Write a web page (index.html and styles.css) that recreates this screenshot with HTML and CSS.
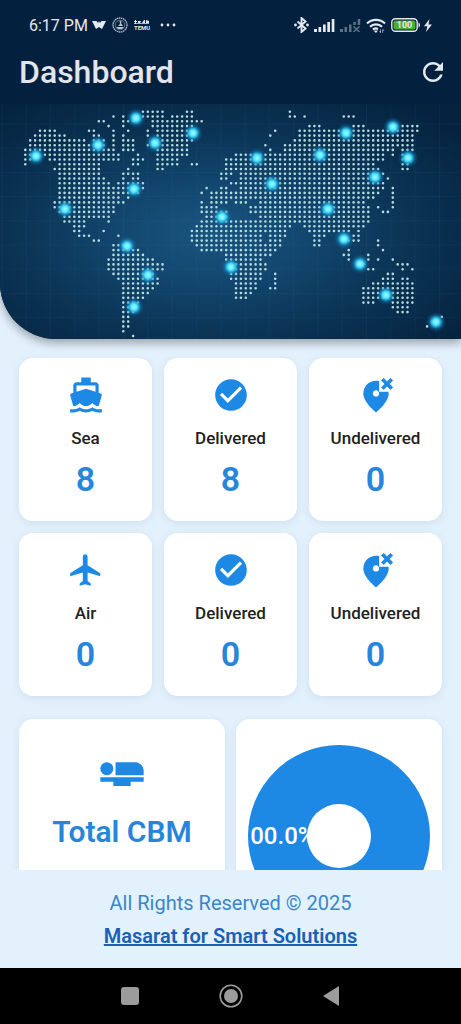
FILE: index.html
```html
<!doctype html>
<html lang="en">

<head>
  <meta charset="utf-8" />
  <meta name="viewport" content="width=device-width,initial-scale=1" />
  <meta name="theme-color" content="#03213e" />
  <title>Dashboard</title>

  <link rel="stylesheet" href="styles.css">
</head>

<body>
  <svg class="defs" aria-hidden="true">
    <symbol id="icon-boat" viewBox="0 0 24 24">
      <path d="M20 21c-1.39 0-2.78-.47-4-1.32-2.44 1.71-5.56 1.71-8 0C6.78 20.53 5.39 21 4 21H2v2h2c1.38 0 2.74-.35 4-.99 2.52 1.29 5.48 1.29 8 0 1.26.65 2.62.99 4 .99h2v-2h-2zM3.95 19H4c1.6 0 3.02-.88 4-2 .98 1.12 2.4 2 4 2s3.02-.88 4-2c.98 1.12 2.4 2 4 2h.05l1.89-6.68c.08-.26.06-.54-.06-.78s-.34-.42-.6-.5L20 10.62V6c0-1.1-.9-2-2-2h-3V1H9v3H6c-1.1 0-2 .9-2 2v4.62l-1.29.42c-.26.08-.48.26-.6.5s-.15.52-.06.78L3.95 19zM6 6h12v3.97L12 8 6 9.97V6z" />
    </symbol>
    <symbol id="icon-check" viewBox="0 0 24 24">
      <path d="M12 2C6.48 2 2 6.48 2 12s4.48 10 10 10 10-4.48 10-10S17.52 2 12 2zm-2 15l-5-5 1.41-1.41L10 14.17l7.59-7.59L19 8l-9 9z" />
    </symbol>
    <symbol id="icon-wrong" viewBox="0 0 24 24">
      <path d="M14 10V3.26C13.35 3.09 12.68 3 12 3c-4.2 0-8 3.22-8 8.2 0 3.32 2.67 7.25 8 11.8 5.33-4.55 8-8.48 8-11.8 0-.41-.04-.81-.09-1.2H14zm-2 3c-1.1 0-2-.9-2-2s.9-2 2-2 2 .9 2 2-.9 2-2 2z" />
      <path d="M22.540 2.880l-1.420-1.420L19 3.590l-2.120-2.130-1.420 1.420L17.590 5l-2.130 2.120 1.420 1.420L19 6.410l2.120 2.130 1.420-1.420L20.410 5z" stroke="currentColor" stroke-width=".5" />
    </symbol>
    <symbol id="icon-flight" viewBox="0 0 24 24">
      <path d="M21 16v-2l-8-5V3.5c0-.83-.67-1.5-1.5-1.5S10 2.67 10 3.5V9l-8 5v2l8-2.5V19l-2 1.5V22l3.5-1 3.5 1v-1.5L13 19v-5.5l8 2.5z" />
    </symbol>
  </svg>

  <header class="header">
    <div class="status">
      <div class="status-left">
        <span class="time">6:17 PM</span>
        <svg width="14" height="12" viewBox="0 0 14 12">
          <path d="M0 2h4.500l1.500 2 1-2 1 2 1.500-2H14l-4 8L7 8l-3 2z" />
        </svg>
        <svg class="emblem" width="16" height="16" viewBox="0 0 16 16">
          <circle cx="8" cy="8" r="7" fill="none" stroke="currentColor" stroke-width="1.300" stroke-dasharray="1.500 .6" />
          <circle cx="8" cy="8" r="4.800" fill="none" stroke="currentColor" stroke-width=".5" />
          <path d="M4 10h8l-2 2H6zM7.500 4h2L9 6l2 3H6l2-2z" />
        </svg>
        <svg class="temu" width="16" height="12" viewBox="0 0 16 12">
          <path d="M0 2h3v1H0zM1 1h1v4H1zM4 2h3l-1 2H4zM8 4l2-3h1v3zM12 1l3 1v2h-3zM0 4h15v.8H0z" />
          <text x="0" y="11">TEMU</text>
        </svg>
        <svg width="16" height="4" viewBox="0 0 16 4">
          <circle cx="2" cy="2" r="1.400" />
          <circle cx="8" cy="2" r="1.400" />
          <circle cx="14" cy="2" r="1.400" />
        </svg>
      </div>
      <div class="status-right">
        <svg width="15" height="16" viewBox="0 0 15 16">
          <path d="M3.500 4.500l8 7-4 3.500V1l4 3.500-8 7" fill="none" stroke="currentColor" stroke-width="1.900" />
          <circle cx="1.500" cy="8" r="1.400" />
          <circle cx="13.500" cy="8" r="1.400" />
        </svg>
        <svg width="21" height="14" viewBox="0 0 21 14">
          <path d="M0 11h3v3H0zM4.500 9h2.700v5H4.500zM9 6.500h2.700V14H9zM13.300 4h2.700v10h-2.700zM17.700 1h2.700v13h-2.700z" />
        </svg>
        <svg class="dim" width="21" height="14" viewBox="0 0 21 14">
          <path d="M0 11h3v3H0zM4.500 9h2.500v5H4.500zM9 6.500h2.500V14H9zM13.300 4h2.500v3h-2.500zM17.700 1h2.500v6h-2.500z" />
          <path d="M13.500 8.500l6 5.500m0-5.500l-6 5.500" fill="none" stroke="currentColor" stroke-width="1.600" />
        </svg>
        <svg width="20" height="15" viewBox="0 0 20 15">
          <path d="M1 5.500a13 13 0 0 1 18 0M4 8.800a8.500 8.500 0 0 1 12 0M7 11.500a4.500 4.500 0 0 1 5 -.6" fill="none" stroke="currentColor" stroke-width="2.200" />
          <path d="M7.500 12.500L10 15l2-2.500zM14.500 11v2.500h-1.500l2 1.500V11zM17 15v-2.500h1.500l-2-1.500V15z" />
        </svg>
        <div class="power">
          <svg class="battery" width="30" height="14" viewBox="0 0 30 14">
            <rect x=".8" y=".8" width="25.400" height="12.400" rx="3.500" fill="none" stroke="currentColor" stroke-width="1.400" />
            <rect class="charge" x="2.500" y="2.500" width="22" height="9" rx="2" />
            <path d="M27.500 4.500c2 .5 2 4.500 0 5z" />
            <text x="13.500" y="10.300">100</text>
          </svg>
          <svg width="8" height="13" viewBox="0 0 8 13">
            <path d="M5.500 0L0 7.300h3.400L2 13l6-7.500H4.500z" />
          </svg>
        </div>
      </div>
    </div>

    <div class="title-bar">
      <h1>Dashboard</h1>
      <button type="button" class="refresh" aria-label="Refresh">
        <svg viewBox="0 0 24 24">
          <path d="M17.650 6.350C16.200 4.900 14.210 4 12 4c-4.420 0-7.990 3.580-7.990 8s3.570 8 7.990 8c3.730 0 6.840-2.550 7.730-6h-2.080c-.82 2.330-3.040 4-5.650 4-3.310 0-6-2.690-6-6s2.690-6 6-6c1.660 0 3.140.69 4.220 1.780L13 11h7V4l-2.350 2.350z" />
        </svg>
      </button>
    </div>

    <svg class="map" viewBox="0 0 461 235" aria-label="World map">
      <defs>
        <radialGradient id="glow">
          <stop offset="0" stop-color="#9ffcff" />
          <stop offset=".3" stop-color="#5be8fb" />
          <stop offset=".5" stop-color="#22b2e6" stop-opacity=".85" />
          <stop offset=".7" stop-color="#1583bd" stop-opacity=".4" />
          <stop offset="1" stop-color="#0f70ad" stop-opacity="0" />
        </radialGradient>
      </defs>
      <path class="map-grid" />
      <path class="map-dots" />
      <g class="map-nodes"></g>
    </svg>
  </header>

  <main class="content">
    <div class="stats">
      <section class="card stat">
        <svg class="icon"><use href="#icon-boat" /></svg>
        <div class="label">Sea</div>
        <div class="number">8</div>
      </section>
      <section class="card stat">
        <svg class="icon"><use href="#icon-check" /></svg>
        <div class="label">Delivered</div>
        <div class="number">8</div>
      </section>
      <section class="card stat">
        <svg class="icon"><use href="#icon-wrong" /></svg>
        <div class="label">Undelivered</div>
        <div class="number">0</div>
      </section>
      <section class="card stat">
        <svg class="icon"><use href="#icon-flight" /></svg>
        <div class="label">Air</div>
        <div class="number">0</div>
      </section>
      <section class="card stat">
        <svg class="icon"><use href="#icon-check" /></svg>
        <div class="label">Delivered</div>
        <div class="number">0</div>
      </section>
      <section class="card stat">
        <svg class="icon"><use href="#icon-wrong" /></svg>
        <div class="label">Undelivered</div>
        <div class="number">0</div>
      </section>
    </div>

    <div class="totals">
      <section class="card total">
        <svg class="icon" viewBox="0 0 24 24">
          <circle cx="5" cy="10" r="3" />
          <path d="M22 11v2H9V7h9c2.210 0 4 1.790 4 4zM2 14v2h6v2h8v-2h6v-2z" />
        </svg>
        <div class="total-title">Total CBM</div>
      </section>
      <section class="card chart">
        <svg viewBox="0 0 182 182">
          <circle class="ring" cx="91" cy="91" r="91" />
          <text x="28" y="99">100.0%</text>
          <circle class="hole" cx="91" cy="91" r="32" />
        </svg>
      </section>
    </div>
  </main>

  <footer class="footer">
    <div class="rights">All Rights Reserved © 2025</div>
    <a href="#">Masarat for Smart Solutions</a>
  </footer>

  <nav class="nav">
    <button type="button" aria-label="Recent apps">
      <svg viewBox="0 0 24 24"><rect x="3" y="3" width="18" height="18" rx="3" /></svg>
    </button>
    <button type="button" aria-label="Home">
      <svg viewBox="0 0 24 24">
        <circle cx="12" cy="12" r="10.800" fill="none" stroke="currentColor" stroke-width="1.600" />
        <circle cx="12" cy="12" r="7" />
      </svg>
    </button>
    <button type="button" aria-label="Back">
      <svg viewBox="0 0 24 24"><path d="M19 2v20L3 12z" /></svg>
    </button>
  </nav>

  <script src="map.js"></script>
</body>

</html>
```
FILE: map.js
```js
// columns that have a dot, one entry per row from north to south
var rows = [
  '',
  '24-28 33-34 54',
  '18 20 24-28 30-34 54-55 57 65-67',
  '15-16 20-22 26-36',
  '17 20 26-34 58-60 67-69 77-80',
  '3-6 13-14 18 21 25 27-34 51 56-80',
  '2-8 14-15 18 20 25 27-34 50 56-79',
  '1-12 14-16 18 20-22 27-34 55-79',
  '1-16 18 20-22 25-33 49 53-79',
  '0-18 20-22 27-33 50 53-75 77-79',
  '0-1 4-19 23 27-33 43-73 75 77',
  '0-1 5-19 22-24 27-31 41-73 77-78',
  '0 7-15 22-23 27-31 34-35 41-71 77-78',
  '6-15 21 27-28 41-72 77-78',
  '7-15 20-23 40-42 44-73',
  '7-16 20 22-23 40-41 44-72 74',
  '7-17 19-24 42-73',
  '7-24 37 40-41 44-73 75',
  '7-23 36 38-72 75',
  '7-19 21 38-71 75',
  '6-20 36 38-41 43-45 48-69 75',
  '6-18 36-39 46-70 72 75',
  '7-18 36-41 46-70 73-74',
  '8-17 37-41 48-70',
  '8-12 17 36-70',
  '10-12 35-54 57-69',
  '10-11 16 34-53 58-66 68',
  '11-13 19 34-48 50-53 59-61 67-68',
  '14-15 34-48 50-52 59-60 65-68 72',
  '18-20 35-52 59-60 72',
  '18-23 36-51 66 73',
  '18-24 41-50 65-66 70',
  '17-26 41-48 66 70 72 75',
  '17-28 42-49 69 76-78',
  '17-28 42-49 70-71 77 79',
  '18-26 42-48 51 74-75',
  '19-27 42-48 51 73-75 77-78',
  '20-27 43-47 51 71-79',
  '20-26 43-47 50-51 69-79',
  '20-25 43-46 69-79',
  '20-24 43-45 69-79',
  '20-23 69-71 75-79',
  '20-22 75-78',
  '20-22 76-78',
  '20-21 85',
  '20-21 83',
  '20-21 82',
  '20',
  '22'
];

var nodes = [
  [36, 52], [98, 41], [136, 14], [155, 39], [193, 29], [134, 85],
  [65, 105], [222, 113], [257, 54], [272, 80], [320, 51], [346, 29],
  [393, 23], [408, 54], [375, 73], [328, 105], [344, 135], [360, 160],
  [386, 191], [436, 218], [127, 142], [148, 171], [134, 203], [231, 163]
];

function drawDots() {
  var d = '';
  rows.forEach(function (row, r) {
    row.split(' ').filter(Boolean).forEach(function (range) {
      var ends = range.split('-').map(Number);
      var last = ends[1] || ends[0];
      for (var c = ends[0]; c <= last; c++) {
        d += 'M' + (25.3 + c * 4.9).toFixed(1) + ' ' + (3 + r * 4.77).toFixed(1) + 'h0';
      }
    });
  });
  document.querySelector('.map-dots').setAttribute('d', d);
}

function drawGrid() {
  var d = '';
  for (var x = 2; x < 461; x += 24.3) {
    d += 'M' + x + ' 0v235';
  }
  for (var y = 20; y < 235; y += 24.2) {
    d += 'M0 ' + y + 'h461';
  }
  document.querySelector('.map-grid').setAttribute('d', d);
}

function drawNodes() {
  document.querySelector('.map-nodes').innerHTML = nodes.map(function (n) {
    return '<circle cx="' + n[0] + '" cy="' + n[1] + '" r="10" fill="url(#glow)" />';
  }).join('');
}

drawGrid();
drawDots();
drawNodes();
```
FILE: styles.css
```css
html,
body {
  height: 100%;
  margin: 0;
  padding: 0;
}

* {
  box-sizing: border-box;
  font-family: Roboto, sans-serif;
}

body {
  display: flex;
  flex-direction: column;
  background: #e3f1fc;
}

svg {
  display: block;
  fill: currentColor;
}

button {
  border: 0;
  padding: 0;
  background: none;
  color: inherit;
  cursor: pointer;
}

.defs {
  position: absolute;
  width: 0;
  height: 0;
}

.header {
  flex: none;
  overflow: hidden;
  position: relative;
  background: #03213e;
  color: #e4e8f0;
  border-bottom-left-radius: 56px;
  box-shadow: 0 4px 10px #0005;
}

.status {
  display: flex;
  align-items: center;
  justify-content: space-between;
  height: 48px;
  padding: 2px 29px 0;
}

.status-left,
.status-right,
.power {
  display: flex;
  align-items: center;
}

.status-left {
  gap: 6px;
}

.status-right {
  gap: 5px;
}

.power {
  gap: 3px;
}

.time {
  font-size: 16px;
  margin-right: -2px;
}

.emblem {
  opacity: 0.8;
}

.dim {
  opacity: 0.4;
}

.temu {
  margin-right: 4px;
}

.temu text {
  font-size: 6px;
  font-weight: bold;
}

.battery .charge {
  fill: #49b02c;
}

.battery text {
  font-size: 9px;
  font-weight: bold;
  text-anchor: middle;
}

.title-bar {
  display: flex;
  align-items: center;
  justify-content: space-between;
  height: 56px;
  padding: 0 13px 8px 19px;
}

h1 {
  margin: 0;
  font-size: 32px;
  line-height: 40px;
  font-weight: 500;
  color: #e4e4ec;
}

.refresh {
  width: 30px;
  height: 30px;
}

.map {
  width: 100%;
  background: radial-gradient(ellipse at 46% 55%, #19557f, #12466e 28%, #0b3455 55%, #05233f 90%);
}

.map-grid {
  fill: none;
  stroke: #5aa0d0;
  stroke-opacity: 0.07;
}

.map-dots {
  fill: none;
  stroke: #b5dcdf;
  stroke-width: 2.6;
  stroke-linecap: round;
}

.content {
  flex: 1;
  min-height: 0;
  overflow: auto;
  scrollbar-width: none;
  padding: 19px 19px 0;
}

.card {
  background: #fff;
  border-radius: 14px;
  box-shadow: 0 2px 8px #1e50801c;
}

.stats {
  display: grid;
  grid-template-columns: repeat(3, 1fr);
  gap: 12px;
}

.stat {
  display: flex;
  flex-direction: column;
  align-items: center;
  height: 163px;
  padding-top: 18px;
}

.icon {
  width: 38px;
  height: 38px;
  color: #1e88e5;
}

.label {
  margin-top: 12px;
  font-size: 17px;
  line-height: 24px;
  font-weight: 500;
  color: #222;
}

.number {
  margin-top: 9px;
  font-size: 34px;
  line-height: 40px;
  font-weight: 600;
  color: #2785da;
}

.totals {
  display: grid;
  grid-template-columns: 1fr 1fr;
  gap: 11px;
  margin-top: 23px;
}

.total {
  display: flex;
  flex-direction: column;
  align-items: center;
  padding-top: 28px;
}

.total .icon {
  width: 52px;
  height: 52px;
}

.total-title {
  margin-top: 13px;
  font-size: 30px;
  line-height: 40px;
  font-weight: 600;
  color: #2785da;
}

.chart {
  padding: 26px 12px;
}

.chart svg {
  overflow: visible;
}

.chart .ring {
  fill: #1e88e5;
}

.chart .hole,
.chart text {
  fill: #fff;
}

.chart text {
  font-size: 24px;
  font-weight: 500;
  text-anchor: middle;
}

.footer {
  flex: none;
  display: flex;
  flex-direction: column;
  align-items: center;
  gap: 7px;
  height: 98px;
  padding-top: 20px;
  background: #e3f1fc;
  font-size: 20px;
  line-height: 26px;
}

.rights {
  color: #3a86cb;
}

.footer a {
  color: #1a60b6;
  font-weight: 600;
}

.nav {
  flex: none;
  display: flex;
  justify-content: center;
  gap: 77px;
  height: 56px;
  background: #000;
  color: #9c9c9c;
}

.nav svg {
  width: 24px;
  height: 24px;
}
```
